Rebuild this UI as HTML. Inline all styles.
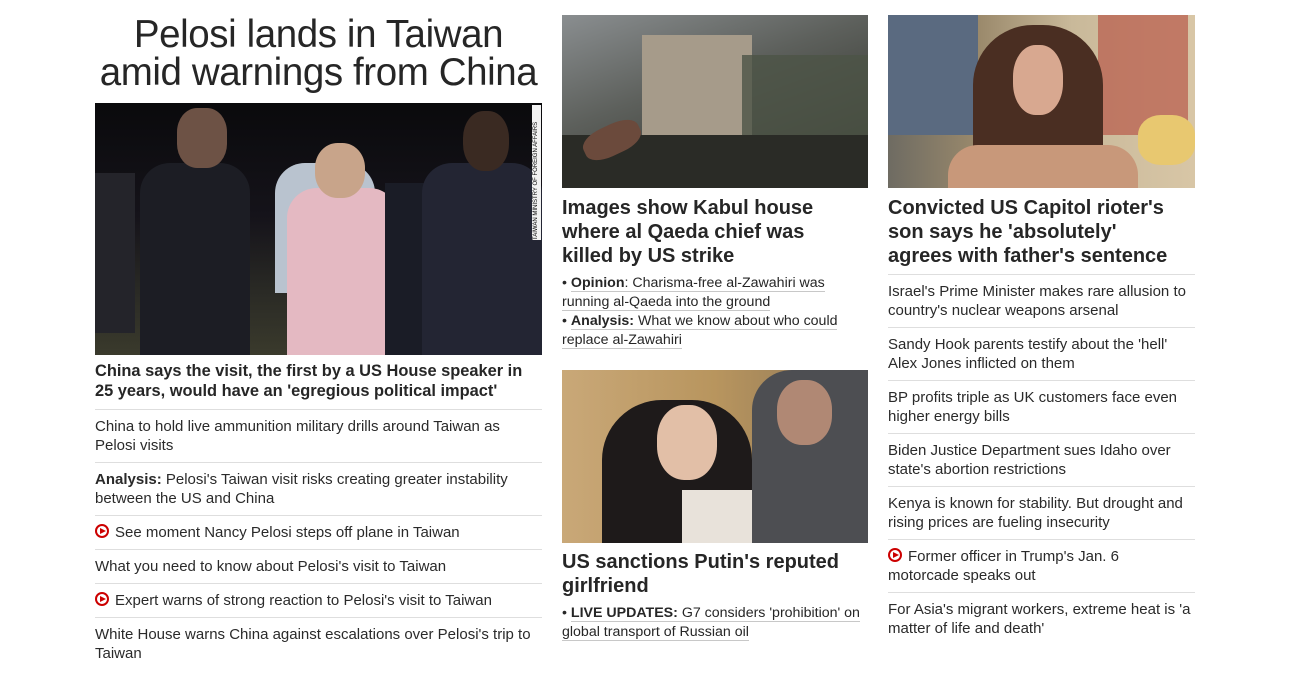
<!DOCTYPE html>
<html><head><meta charset="utf-8"><style>
*{margin:0;padding:0;box-sizing:border-box}
body{width:1290px;height:690px;background:#fff;font-family:"Liberation Sans",Arial,sans-serif;color:#262626;position:relative;overflow:hidden}
.col{position:absolute;top:0}
.c1{left:95px;width:447px}
.c2{left:562px;width:306px}
.c3{left:888px;width:307px}
h1{font-size:38.5px;font-weight:400;line-height:38px;text-align:center;color:#262626;margin:16px -4px 0;letter-spacing:-0.4px;white-space:nowrap}
.img{position:relative;overflow:hidden}
.hl{font-weight:700;font-size:16.4px;line-height:20px;color:#262626;padding:6px 0 8px;width:436px}
.big{font-size:20px;line-height:24px;font-weight:700;padding:8px 0 6px;width:288px}
ul{list-style:none}
li{border-top:1px solid #dedede;font-size:15px;line-height:19px;padding:7px 0 7px;color:#2a2a2a}
li b{font-weight:700}
.play{display:inline-block;width:14px;height:14px;border:2px solid #cc0000;border-radius:50%;position:relative;vertical-align:-1px;margin-right:6px}
.play:after{content:"";position:absolute;left:3px;top:1.5px;border-left:6px solid #cc0000;border-top:3.5px solid transparent;border-bottom:3.5px solid transparent}
.bul{font-size:14.2px;line-height:19px}
.bul span{border-bottom:1px solid #c8c8c8}
</style></head><body>
<div class="col c1">
<h1>Pelosi lands in Taiwan<br>amid warnings from China</h1>
<div class="img" style="margin-top:11px;height:252px;background:linear-gradient(#0a0a0c 0%,#15131a 45%,#2a2a25 75%,#3a3a2c 100%)">
 <div style="position:absolute;left:45px;top:60px;width:110px;height:192px;background:#1c1d24;border-radius:30px 30px 0 0"></div>
 <div style="position:absolute;left:82px;top:5px;width:50px;height:60px;background:#6d5245;border-radius:40%"></div>
 <div style="position:absolute;left:180px;top:60px;width:100px;height:130px;background:#b9c3cf;border-radius:30px 30px 0 0"></div>
 <div style="position:absolute;left:192px;top:85px;width:112px;height:167px;background:#e4b9c2;border-radius:30px 30px 0 0"></div>
 <div style="position:absolute;left:220px;top:40px;width:50px;height:55px;background:#c8a48a;border-radius:45%"></div>
 <div style="position:absolute;left:290px;top:80px;width:50px;height:172px;background:#1a1c26"></div>
 <div style="position:absolute;left:327px;top:60px;width:120px;height:192px;background:#232533;border-radius:30px 30px 0 0"></div>
 <div style="position:absolute;left:368px;top:8px;width:46px;height:60px;background:#3a2a22;border-radius:45%"></div>
 <div style="position:absolute;left:0;top:70px;width:40px;height:160px;background:#24242a"></div>
 <div style="position:absolute;right:1px;top:2px;width:9px;height:135px;background:#f2f2f2;font-size:6px;writing-mode:vertical-rl;transform:rotate(180deg);color:#000;line-height:9px;overflow:hidden">TAIWAN MINISTRY OF FOREIGN AFFAIRS</div>
</div>
<div class="hl">China says the visit, the first by a US House speaker in 25 years, would have an 'egregious political impact'</div>
<ul>
<li>China to hold live ammunition military drills around Taiwan as Pelosi visits</li>
<li><b>Analysis:</b> Pelosi's Taiwan visit risks creating greater instability between the US and China</li>
<li><span class="play"></span>See moment Nancy Pelosi steps off plane in Taiwan</li>
<li>What you need to know about Pelosi's visit to Taiwan</li>
<li><span class="play"></span>Expert warns of strong reaction to Pelosi's visit to Taiwan</li>
<li>White House warns China against escalations over Pelosi's trip to Taiwan</li>
</ul>
</div>
<div class="col c2">
<div class="img" style="margin-top:15px;height:173px;background:linear-gradient(160deg,#8a8e90 0%,#5d605c 40%,#3d3f38 75%,#2c2d28 100%)">
 <div style="position:absolute;left:80px;top:20px;width:110px;height:100px;background:#a69b8a"></div>
 <div style="position:absolute;left:180px;top:40px;width:126px;height:133px;background:#4c5446;opacity:.8"></div>
 <div style="position:absolute;left:0;top:120px;width:306px;height:53px;background:#2a2b26"></div>
 <div style="position:absolute;left:20px;top:110px;width:60px;height:30px;background:#6b4a3c;border-radius:40%;transform:rotate(-25deg)"></div>
</div>
<div class="big">Images show Kabul house where al Qaeda chief was killed by US strike</div>
<div class="bul">• <span><b>Opinion</b>: Charisma-free al-Zawahiri was</span><br><span>running al-Qaeda into the ground</span><br>• <span><b>Analysis:</b> What we know about who could</span><br><span>replace al-Zawahiri</span></div>
<div class="img" style="position:absolute;top:370px;left:0;width:306px;height:173px;background:linear-gradient(90deg,#c9a878 0%,#b8955e 50%,#8a7458 100%)">
 <div style="position:absolute;left:40px;top:30px;width:150px;height:143px;background:#1e1a1a;border-radius:60px 60px 0 0"></div>
 <div style="position:absolute;left:95px;top:35px;width:60px;height:75px;background:#e2bfa7;border-radius:45%"></div>
 <div style="position:absolute;left:120px;top:120px;width:80px;height:53px;background:#e8e2da"></div>
 <div style="position:absolute;left:190px;top:0;width:116px;height:173px;background:#4d4e52;border-radius:40px 0 0 0"></div>
 <div style="position:absolute;left:215px;top:10px;width:55px;height:65px;background:#b08874;border-radius:45%"></div>
</div>
<div style="position:absolute;top:543px;left:0;width:306px">
<div class="big" style="padding-top:7px">US sanctions Putin's reputed girlfriend</div>
<div class="bul">• <span><b>LIVE UPDATES:</b> G7 considers 'prohibition' on</span><br><span>global transport of Russian oil</span></div>
</div>
</div>
<div class="col c3">
<div class="img" style="margin-top:15px;height:173px;background:linear-gradient(90deg,#6e6b62 0%,#9b8a6c 30%,#c9b99a 60%,#d8c6a6 100%)">
 <div style="position:absolute;left:0;top:0;width:90px;height:120px;background:#5a6a80"></div>
 <div style="position:absolute;left:210px;top:0;width:90px;height:120px;background:#b85a4a;opacity:.7"></div>
 <div style="position:absolute;left:85px;top:10px;width:130px;height:163px;background:#4a2e22;border-radius:60px 60px 0 0"></div>
 <div style="position:absolute;left:125px;top:30px;width:50px;height:70px;background:#d8a890;border-radius:45%"></div>
 <div style="position:absolute;left:60px;top:130px;width:190px;height:43px;background:#c8987a;border-radius:30px 30px 0 0"></div>
 <div style="position:absolute;left:250px;top:100px;width:57px;height:50px;background:#e8c870;border-radius:40%"></div>
</div>
<div class="big">Convicted US Capitol rioter's son says he 'absolutely' agrees with father's sentence</div>
<ul>
<li>Israel's Prime Minister makes rare allusion to country's nuclear weapons arsenal</li>
<li>Sandy Hook parents testify about the 'hell' Alex Jones inflicted on them</li>
<li>BP profits triple as UK customers face even higher energy bills</li>
<li>Biden Justice Department sues Idaho over state's abortion restrictions</li>
<li>Kenya is known for stability. But drought and rising prices are fueling insecurity</li>
<li><span class="play"></span>Former officer in Trump's Jan. 6<br>motorcade speaks out</li>
<li>For Asia's migrant workers, extreme heat is 'a matter of life and death'</li>
</ul>
</div>
</body></html>
